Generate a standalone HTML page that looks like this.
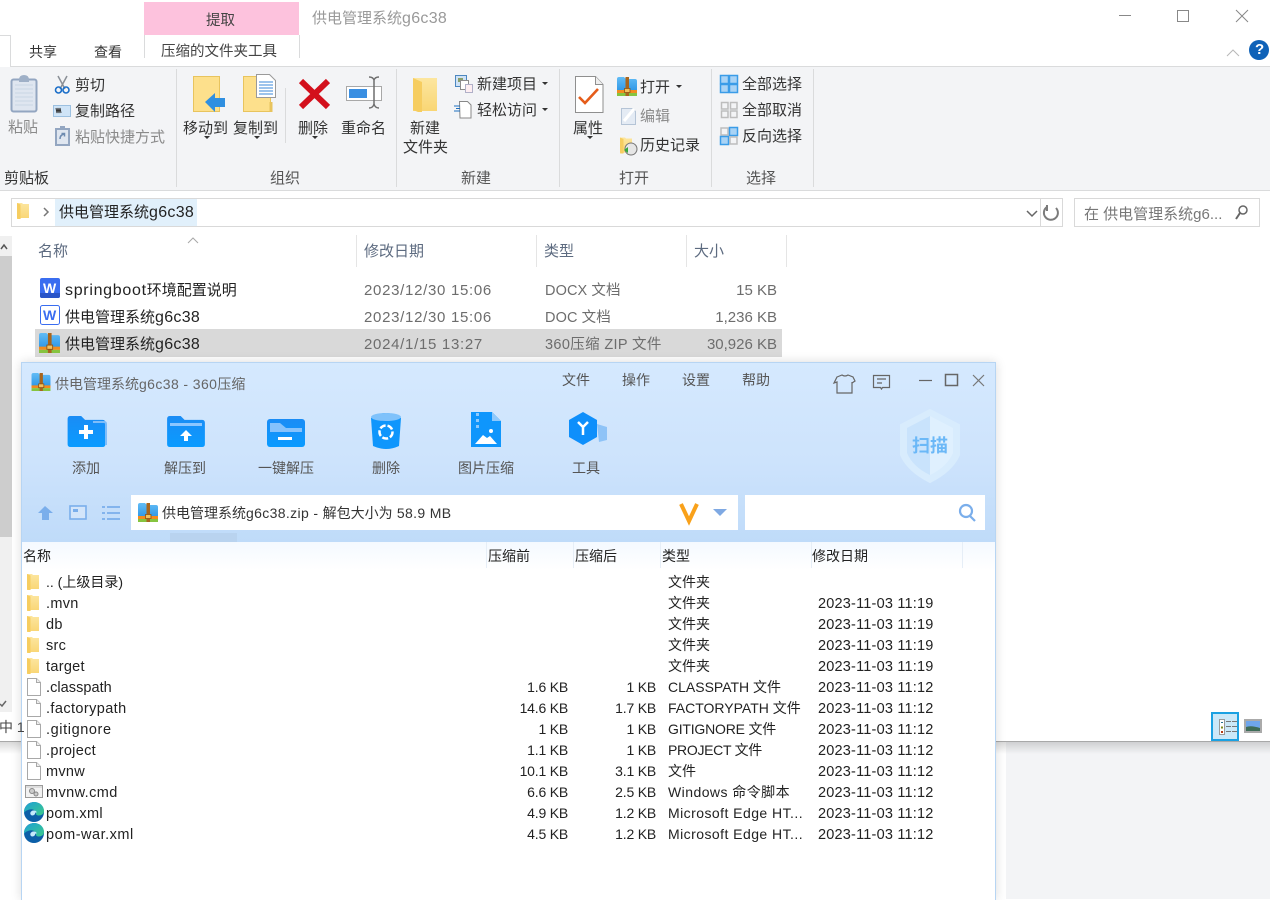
<!DOCTYPE html>
<html lang="zh"><head><meta charset="utf-8"><title>供电管理系统g6c38</title>
<style>
html,body{margin:0;padding:0;background:#fff}
body{width:1270px;height:899px;position:relative;overflow:hidden;font-family:"Liberation Sans","Noto Sans CJK SC",sans-serif;font-size:15px;color:#333}
.b,.t{position:absolute}
.t{white-space:nowrap;line-height:20px;margin-top:1px}
.g{color:#8a8a8a}.d{color:#6d6d6d;margin-top:2px}.h{color:#5d6b80}
.l{letter-spacing:.7px}
.r{text-align:right}
.c{text-align:center}
.w{font-size:14px;color:#555;margin-top:0}
.f,.n,.y,.m{color:#222;margin-top:2px}
.f{font-size:14.5px;letter-spacing:.3px}
.n{font-size:14px;letter-spacing:-.2px;margin-top:1px}
.y{font-size:14px;margin-top:1px}
.m{font-size:14.5px;letter-spacing:.2px}
.u{margin-top:0;font-size:14px;color:#555}
.e{margin-top:2px}
.s{margin-top:0;font-size:14px;color:#222}
i{font-style:normal;font-size:16px;letter-spacing:.3px}
i.k{font-size:14px;letter-spacing:.4px}
svg{position:absolute;left:0;top:0}
</style></head><body>

<!-- explorer backgrounds -->
<div class="b" style="left:1006px;top:741px;width:264px;height:158px;background:#f3f4f6"></div>
<div class="b" style="left:0;top:741px;width:1270px;height:1px;background:#a8a8a8"></div>
<div class="b" style="left:0;top:742px;width:1270px;height:12px;background:linear-gradient(#00000026,#00000000)"></div>
<div class="b" style="left:0;top:66px;width:1270px;height:123px;background:#f3f4f6;border-top:1px solid #dadbdc;border-bottom:1px solid #dadbdc"></div>
<div class="b" style="left:0;top:35px;width:10px;height:31px;background:#fff;border-right:1px solid #dadbdc;border-top:1px solid #dadbdc"></div>
<div class="b" style="left:144px;top:2px;width:155px;height:33px;background:#fdc2dd"></div>
<div class="b" style="left:144px;top:35px;width:154px;height:23px;background:#fff;border-left:1px solid #dadbdc;border-right:1px solid #dadbdc"></div>
<div class="b" style="left:176px;top:69px;width:1px;height:118px;background:#dadbdc"></div>
<div class="b" style="left:396px;top:69px;width:1px;height:118px;background:#dadbdc"></div>
<div class="b" style="left:559px;top:69px;width:1px;height:118px;background:#dadbdc"></div>
<div class="b" style="left:711px;top:69px;width:1px;height:118px;background:#dadbdc"></div>
<div class="b" style="left:813px;top:69px;width:1px;height:118px;background:#dadbdc"></div>
<div class="b" style="left:285px;top:88px;width:1px;height:55px;background:#dadbdc"></div>

<!-- address + search -->
<div class="b" style="left:11px;top:198px;width:1050px;height:27px;border:1px solid #d9d9d9;background:#fff"></div>
<div class="b" style="left:55px;top:199px;width:142px;height:27px;background:#e1f0fb"></div>
<div class="b" style="left:1040px;top:199px;width:1px;height:27px;background:#d9d9d9"></div>
<div class="b" style="left:1074px;top:198px;width:184px;height:27px;border:1px solid #d9d9d9;background:#fff"></div>

<!-- left scrollbar -->
<div class="b" style="left:0;top:236px;width:12px;height:476px;background:#f0f0f0"></div>
<div class="b" style="left:0;top:256px;width:12px;height:281px;background:#cdcdcd"></div>

<!-- column separators and selection -->
<div class="b" style="left:356px;top:235px;width:1px;height:32px;background:#e5e5e5"></div>
<div class="b" style="left:536px;top:235px;width:1px;height:32px;background:#e5e5e5"></div>
<div class="b" style="left:686px;top:235px;width:1px;height:32px;background:#e5e5e5"></div>
<div class="b" style="left:786px;top:235px;width:1px;height:32px;background:#e5e5e5"></div>
<div class="b" style="left:35px;top:329px;width:747px;height:28px;background:#d9d9d9"></div>

<!-- view buttons bg -->
<div class="b" style="left:1211px;top:712px;width:24px;height:25px;background:#cbe8f8;border:2px solid #1ba1e2"></div>

<!-- 360 window -->
<div class="b" style="left:21px;top:362px;width:973px;height:537px;background:#fff;border:1px solid #b7d5f3;border-bottom:0;box-shadow:0 0 10px rgba(0,0,0,.14)"></div>
<div class="b" style="left:22px;top:363px;width:973px;height:179px;background:linear-gradient(#d5e9fe,#cde3fc 55%,#bfdbf9)"></div>
<div class="b" style="left:22px;top:542px;width:973px;height:28px;background:linear-gradient(#f4f9ff,#fff)"></div>
<div class="b" style="left:131px;top:495px;width:607px;height:35px;background:#fff"></div>
<div class="b" style="left:745px;top:495px;width:240px;height:35px;background:#fff"></div>
<div class="b" style="left:170px;top:533px;width:67px;height:9px;background:#b9d3ef"></div>
<div class="b" style="left:486px;top:542px;width:1px;height:26px;background:#e6eef7"></div>
<div class="b" style="left:573px;top:542px;width:1px;height:26px;background:#e6eef7"></div>
<div class="b" style="left:660px;top:542px;width:1px;height:26px;background:#e6eef7"></div>
<div class="b" style="left:811px;top:542px;width:1px;height:26px;background:#e6eef7"></div>
<div class="b" style="left:962px;top:542px;width:1px;height:26px;background:#e6eef7"></div>

<svg width="1270" height="899" viewBox="0 0 1270 899" xmlns="http://www.w3.org/2000/svg">
<defs>
<linearGradient id="fy" x1="0" y1="0" x2="0" y2="1"><stop offset="0" stop-color="#fce69f"/><stop offset="1" stop-color="#f9d674"/></linearGradient>
<linearGradient id="bl" x1="0" y1="0" x2="0" y2="1"><stop offset="0" stop-color="#1a8cf5"/><stop offset="1" stop-color="#0a9bff"/></linearGradient>
<linearGradient id="zb" x1="0" y1="0" x2="0" y2="1"><stop offset="0" stop-color="#62bcf6"/><stop offset="1" stop-color="#2f97e6"/></linearGradient>
<linearGradient id="eg" x1="0" y1="0" x2="1" y2="1"><stop offset="0" stop-color="#1c9fd8"/><stop offset="1" stop-color="#3ccb8a"/></linearGradient>
<symbol id="folder" viewBox="0 0 12 16"><path d="M0 0h5l1 1h6v14H4l-1 1H0z" fill="url(#fy)"/><path d="M0 0l3.500 1.500V16H1.500L0 15z" fill="#f6cd60"/></symbol>
<symbol id="zip" viewBox="0 0 20 19"><path d="M0 2q0-2 2-2h5l2 2h9q2 0 2 2v10H0z" fill="url(#zb)"/><path d="M0 13h20v3H0z" fill="#f28c1e"/><path d="M0 16h20v3H0z" fill="#86c440"/><path d="M8.500 0h3.500v19H8.500z" fill="#a8651d"/><path d="M7.500 11.500h5.500v4H7.500z" fill="#f3c15c" stroke="#8a4f12" stroke-width=".8"/></symbol>
<symbol id="file" viewBox="0 0 14 18"><path d="M.5.5h9l4 4v13H.5z" fill="#fff" stroke="#a8a8a8"/><path d="M9.500.5v4h4" fill="#eee" stroke="#a8a8a8"/></symbol>
<symbol id="edge" viewBox="0 0 20 20"><circle cx="10" cy="10" r="10" fill="#0c5fa8"/><path d="M0 9C1 3 6 0 10 0c6 0 10 4 10 9 0 3-3 4.500-5 4.500-2 0-3.500-1-3-2.500-.5-3-3.500-4.500-6.500-3.500C3 8.300 1 9 0 11z" fill="url(#eg)"/><path d="M11 12c-1 1.500-3 2-4 1-1.500-1.500-.5-4 2-4.500 2-.3 3.500.5 4 2-1-.3-2 0-2 1.500z" fill="#c4e9fb"/></symbol>
<symbol id="fp" viewBox="0 0 39 32"><path d="M0 3q0-3 3-3h11l4 4h18q3 0 3 3v22q0 3-3 3H3q-3 0-3-3z" fill="url(#bl)"/></symbol>
</defs>

<!-- window controls -->
<path d="M1119 15.500h12" stroke="#888" fill="none"/>
<rect x="1177.500" y="10.500" width="11" height="11" fill="none" stroke="#888"/>
<path d="M1236 10l12 12M1248 10l-12 12" stroke="#888" fill="none"/>
<path d="M1227 56l6-6 6 6" stroke="#b8b8b8" fill="none"/>
<circle cx="1259" cy="50" r="10" fill="#0f62b8"/>

<!-- clipboard group -->
<rect x="11.500" y="79.500" width="25" height="32" rx="2" fill="#dfe6f0" stroke="#93a6c1" stroke-width="2"/>
<path d="M15 85h18M15 89h18M15 93h18M15 97h18M15 101h18M15 105h18" stroke="#c9d5e4"/>
<path d="M19 80q0-5 5-5t5 5v2H19z" fill="#9fb0c7"/>
<path d="M58 76l7 13M67 76l-7 13" stroke="#8a8f96" stroke-width="1.500" fill="none"/>
<circle cx="58.500" cy="90" r="3" fill="none" stroke="#1a6ec8" stroke-width="1.600"/><circle cx="66" cy="90" r="3" fill="none" stroke="#1a6ec8" stroke-width="1.600"/>
<rect x="53.500" y="105.500" width="17" height="11" fill="#cfe4f7" stroke="#9cc0e0"/><path d="M56 108l1 5 1-5 1 5 1-5 1 5" stroke="#333" fill="none"/>
<rect x="56" y="129" width="13" height="16" fill="#dfe6f0" stroke="#93a6c1" stroke-width="2"/><rect x="60" y="126" width="5" height="4" fill="#93a6c1"/><path d="M60 139q0-4 4-5M61.500 133.500h3v3" stroke="#6e8bb0" fill="none" stroke-width="1.500"/>

<!-- organise -->
<path d="M193.500 76.500h26v35h-26z" fill="#fde08c" stroke="#e8c45e"/>
<path d="M205 102l10-9v5h10v9h-10v5z" fill="#2f8fe0"/>
<path d="M243.500 76.500h27v35h-27z" fill="#fde08c" stroke="#e8c45e"/>
<path d="M271 112v-10" stroke="#e8c45e" stroke-width="3"/>
<path d="M256.500 74.500h13l6 6v17h-19z" fill="#fff" stroke="#9a9a9a"/>
<path d="M259 82h14M259 85h14M259 88h14M259 91h14M259 94h14" stroke="#3a87da"/>
<path d="M301 81l27 26M328 81l-27 26" stroke="#d3101c" stroke-width="6" fill="none"/>
<rect x="346.500" y="86.500" width="35" height="14" fill="#fff" stroke="#a8a8a8"/>
<rect x="349" y="89" width="18" height="9" fill="#3a8fe2"/>
<path d="M369 77q4 0 5 3v24q-1 4-5 4M379 77q-4 0-5 3v24q1 4 5 4" stroke="#6e6e6e" stroke-width="1.500" fill="none"/>

<!-- new -->
<path d="M413 78h24v33h-24z" fill="url(#fy)"/><path d="M413 78l9 4v30l-4 0-5-2z" fill="#f6cd60"/>
<rect x="455.500" y="75.500" width="11" height="11" fill="#cfe2f5" stroke="#4c87c0"/><rect x="458" y="78" width="5" height="4" fill="#8a9f6a"/>
<rect x="460.500" y="80.500" width="8" height="9" fill="#fff" stroke="#8d8d8d"/><rect x="465.500" y="84.500" width="7" height="8" fill="#fdeef2" stroke="#b0b0c8"/>
<path d="M459.500 101.500h8l3.500 3.500v13h-11z" fill="#fff" stroke="#888"/>
<path d="M454 106h6M456 108.500h4M454 111h6" stroke="#1d6fc0"/>

<!-- open -->
<path d="M575.500 76.500h20l7.500 8v28h-27.500z" fill="#fff" stroke="#8f8f8f"/><path d="M595.500 76.500v8h7.500" fill="#eee" stroke="#8f8f8f"/>
<path d="M579 97l6 6 13-14" stroke="#e55c1a" stroke-width="2.600" fill="none"/>
<use href="#zip" x="617" y="77" width="20" height="19"/>
<path d="M621.500 108.500h11l3 3v13h-14z" fill="#e4ebf4" stroke="#b5c4d6"/><path d="M624 121l10-12" stroke="#fff" stroke-width="3"/>
<use href="#folder" x="620" y="137" width="12" height="17"/>
<circle cx="631" cy="149" r="6" fill="#e6e6e6" stroke="#777"/><path d="M624 150l4-3v6z" fill="#38a83c"/>

<!-- select -->
<g fill="#a9d3f5" stroke="#3a9ce8" stroke-width="1.500"><rect x="720.500" y="75.500" width="8" height="8"/><rect x="729.500" y="75.500" width="8" height="8"/><rect x="720.500" y="84.500" width="8" height="8"/><rect x="729.500" y="84.500" width="8" height="8"/></g>
<g fill="#f3f4f6" stroke="#bdbdbd" stroke-width="1.500"><rect x="721.500" y="102.500" width="6.500" height="6.500"/><rect x="730.500" y="102.500" width="6.500" height="6.500"/><rect x="721.500" y="111" width="6.500" height="6.500"/><rect x="730.500" y="111" width="6.500" height="6.500"/></g>
<g stroke-width="1.500"><rect x="721" y="128" width="7" height="7" fill="#f3f4f6" stroke="#bdbdbd"/><rect x="729.500" y="127.500" width="8" height="8" fill="#a9d3f5" stroke="#3a9ce8"/><rect x="720.500" y="136.500" width="8" height="8" fill="#a9d3f5" stroke="#3a9ce8"/><rect x="730" y="137" width="7" height="7" fill="#f3f4f6" stroke="#bdbdbd"/></g>

<!-- dropdown triangles -->
<g fill="#333"><path d="M204 136h6l-3 3zM254 136h6l-3 3zM312 136h6l-3 3zM587 136h6l-3 3zM542 82h6l-3 3zM542 108h6l-3 3zM676 85h6l-3 3z"/></g>

<!-- address icons -->
<use href="#folder" x="17" y="203" width="12" height="16"/>
<path d="M44 208l4 4-4 4" stroke="#777" stroke-width="1.500" fill="none"/>
<path d="M1027 211l5 5 5-5" stroke="#666" stroke-width="1.500" fill="none"/>
<path d="M1047 207a7 7 0 1 0 9 1M1047 205v5h-1" stroke="#7b7b7b" stroke-width="2" fill="none"/>
<circle cx="1243" cy="210" r="4" fill="none" stroke="#666" stroke-width="1.500"/><path d="M1240 213l-4 6" stroke="#666" stroke-width="2"/>
<path d="M188 243l5-5 5 5" stroke="#a8a8a8" fill="none"/>
<path d="M1 249l3-4 3 4" stroke="#555" stroke-width="1.500" fill="none"/>
<path d="M0 704l2 2 4-5" stroke="#666" stroke-width="1.500" fill="none"/>

<!-- explorer files -->
<rect x="40" y="278" width="20" height="20" rx="2" fill="#3a6df0"/><path d="M40 293h20v3q0 2-2 2H42q-2 0-2-2z" fill="#2a55c8"/>
<rect x="40.500" y="305.500" width="19" height="19" rx="2" fill="#fff" stroke="#3a6df0"/>
<use href="#zip" x="39" y="333" width="21" height="20"/>

<!-- views -->
<rect x="1219.500" y="719.500" width="5" height="15" fill="#fff" stroke="#999"/>
<path d="M1221 722h2v1h-2z" fill="#27708f"/><path d="M1221 726.500h2v2h-2z" fill="#7c8a1e"/><path d="M1221 731h2v2h-2z" fill="#b83a12"/>
<path d="M1226 721.500h5M1232 721.500h5M1226 726.500h5M1232 726.500h5M1226 731.500h5M1232 731.500h5" stroke="#777"/>
<rect x="1245" y="720" width="16" height="12" fill="#6fa6ec" stroke="#aaa" stroke-width="2"/><path d="M1246 727q5-2 14 1v3h-14z" fill="#3f6d58"/>

<!-- 360 title bar -->
<use href="#zip" x="31" y="373" width="20" height="18"/>
<path d="M837 377l5-2q3 2 6 0l5 2 2 4-3 2v-1 11h-15v-11l-3 1z" fill="none" stroke="#666" stroke-width="1.200"/>
<path d="M873.500 375.500h16v12h-7l-1 1.500-1-1.500h-7zM877 379h9M877 383h5" fill="none" stroke="#666" stroke-width="1.200"/>
<path d="M919 380.500h13" stroke="#666" stroke-width="1.200"/>
<rect x="945.500" y="374.500" width="12" height="11" fill="none" stroke="#666" stroke-width="1.500"/>
<path d="M973 375l11 11M984 375l-11 11" stroke="#777" stroke-width="1.200"/>

<!-- 360 toolbar -->
<use href="#fp" x="67" y="416" width="39" height="31"/>
<path d="M93 422h11q2 0 2 2v21" fill="none" stroke="#7fbdf9" stroke-width="2"/>
<path d="M84 425h4v5h5v4h-5v5h-4v-5h-5v-4h5z" fill="#fff"/>
<use href="#fp" x="167" y="416" width="38" height="31"/>
<path d="M170 423h32v3h-32z" fill="#8cc6ff"/><path d="M186 430l6 6h-4v5h-4v-5h-4z" fill="#fff"/>
<rect x="267" y="419" width="38" height="28" rx="3" fill="url(#bl)"/>
<path d="M270 423h10l6 5h16v4h-32z" fill="#85c2fc"/>
<path d="M278 437h14v3h-14z" fill="#fff"/>
<path d="M371 418q15-10 30 0l-2 28q-13 6-26 0z" fill="#0f96fc"/>
<ellipse cx="386" cy="417" rx="15" ry="4" fill="#7fc2fb"/>
<circle cx="386" cy="432" r="6.500" fill="none" stroke="#fff" stroke-width="2.500" stroke-dasharray="6 2"/>
<path d="M471 412h21l9 9v26h-30z" fill="#0f96fc"/><path d="M492 412l9 9h-9z" fill="#8ec9fc"/>
<path d="M476 413h3v3h-3zM476 419h3v3h-3zM476 425h3v3h-3z" fill="#8ec9fc"/>
<path d="M475 444l8-9 4 3 3-2 7 8z" fill="#fff"/><circle cx="491" cy="431" r="2" fill="#fff"/>
<path d="M597 424l10 3v13l-8 2z" fill="#8ec3f7"/>
<path d="M583 412l14 8v17l-14 8-14-8v-17z" fill="#0e8ffb"/>
<path d="M578 422l5 5 5-5M583 427v8" stroke="#fff" stroke-width="2.500" fill="none"/>

<!-- shield -->
<path d="M930 410l29 15v30q-7 16-29 27q-22-11-29-27v-30z" fill="#d8ecfd" stroke="#d8ecfd" stroke-width="2"/>
<path d="M930 416l-23 12v25q6 14 23 22z" fill="#c9e3fc"/>
<path d="M930 416l23 12v25q-6 14-23 22z" fill="#dff0fe"/>

<!-- 360 address row -->
<path d="M38 513l7-7 8 7h-4v7h-7v-7z" fill="#7aaeeb"/>
<rect x="70" y="506" width="16" height="13" fill="#d3e5fa" stroke="#7aaeeb" stroke-width="1.600"/><path d="M73 509h5v3h-5z" fill="#7aaeeb"/>
<path d="M102 507h3M107 507h13M102 513h3M107 513h13M102 519h3M107 519h13" stroke="#7aaeeb" stroke-width="1.800"/>
<use href="#zip" x="138" y="503" width="20" height="19"/>
<path d="M681 504l8 17 8-17" stroke="#f9a11a" stroke-width="4" fill="none"/>
<path d="M713 509h14l-7 7z" fill="#7fa9e3"/>
<circle cx="966" cy="511" r="6" fill="none" stroke="#7aaeeb" stroke-width="2.200"/><path d="M970 516l5 5" stroke="#7aaeeb" stroke-width="2.200"/>

<!-- list icons -->
<use href="#folder" x="27" y="574" width="12" height="16"/>
<use href="#folder" x="27" y="595" width="12" height="16"/>
<use href="#folder" x="27" y="616" width="12" height="16"/>
<use href="#folder" x="27" y="637" width="12" height="16"/>
<use href="#folder" x="27" y="658" width="12" height="16"/>
<use href="#file" x="27" y="678" width="14" height="18"/>
<use href="#file" x="27" y="699" width="14" height="18"/>
<use href="#file" x="27" y="720" width="14" height="18"/>
<use href="#file" x="27" y="741" width="14" height="18"/>
<use href="#file" x="27" y="762" width="14" height="18"/>
<rect x="25.500" y="785.500" width="17" height="12" fill="#f2f2f2" stroke="#9a9a9a"/><path d="M26 787h16" stroke="#c8c8c8"/><circle cx="32" cy="791" r="2.500" fill="#ccc" stroke="#888"/><circle cx="36" cy="794" r="2" fill="#ccc" stroke="#888"/>
<use href="#edge" x="24" y="802" width="20" height="20"/>
<use href="#edge" x="24" y="823" width="20" height="20"/>
</svg>

<!-- explorer text -->
<div class="t e" style="left:312px;top:7px;color:#999">供电管理系统<i>g6c38</i></div>
<div class="t e" style="left:206px;top:9px;font-size:14.500px;color:#444">提取</div>
<div class="t" style="left:29px;top:41px;font-size:14px">共享</div>
<div class="t" style="left:94px;top:41px;font-size:14px">查看</div>
<div class="t" style="left:161px;top:41px;font-size:14.500px;color:#444">压缩的文件夹工具</div>

<div class="t g" style="left:8px;top:117px">粘贴</div>
<div class="t" style="left:75px;top:75px">剪切</div>
<div class="t" style="left:75px;top:101px">复制路径</div>
<div class="t g" style="left:75px;top:127px">粘贴快捷方式</div>
<div class="t" style="left:183px;top:118px">移动到</div>
<div class="t" style="left:233px;top:118px">复制到</div>
<div class="t" style="left:298px;top:118px">删除</div>
<div class="t" style="left:341px;top:118px">重命名</div>
<div class="t" style="left:410px;top:118px">新建</div>
<div class="t" style="left:403px;top:137px">文件夹</div>
<div class="t" style="left:477px;top:74px">新建项目</div>
<div class="t" style="left:477px;top:100px">轻松访问</div>
<div class="t" style="left:573px;top:118px">属性</div>
<div class="t" style="left:640px;top:77px">打开</div>
<div class="t g" style="left:640px;top:106px">编辑</div>
<div class="t" style="left:640px;top:135px">历史记录</div>
<div class="t" style="left:742px;top:74px">全部选择</div>
<div class="t" style="left:742px;top:100px">全部取消</div>
<div class="t" style="left:742px;top:126px">反向选择</div>
<div class="t e" style="left:4px;top:167px">剪贴板</div>
<div class="t e" style="left:270px;top:167px;color:#555">组织</div>
<div class="t e" style="left:461px;top:167px;color:#555">新建</div>
<div class="t e" style="left:619px;top:167px;color:#555">打开</div>
<div class="t e" style="left:746px;top:167px;color:#555">选择</div>
<div class="t" style="left:1255px;top:39px;color:#fff;font-weight:bold;font-size:15px">?</div>

<div class="t" style="left:59px;top:202px;color:#222">供电管理系统<i>g6c38</i></div>
<div class="t e" style="left:1084px;top:203px;color:#777">在 供电管理系统g6...</div>

<div class="t h" style="left:38px;top:241px">名称</div>
<div class="t h" style="left:364px;top:241px">修改日期</div>
<div class="t h" style="left:544px;top:241px">类型</div>
<div class="t h" style="left:694px;top:241px">大小</div>

<div class="t e" style="left:65px;top:279px;color:#222"><i style="letter-spacing:.7px">springboot</i>环境配置说明</div>
<div class="t e" style="left:65px;top:306px;color:#222">供电管理系统<i>g6c38</i></div>
<div class="t e" style="left:65px;top:333px;color:#222">供电管理系统<i>g6c38</i></div>
<div class="t" style="left:43px;top:278px;color:#fff;font-weight:bold;font-size:14px;margin-top:0">W</div>
<div class="t" style="left:43px;top:305px;color:#3a6df0;font-weight:bold;font-size:14px;margin-top:0">W</div>

<div class="t d l" style="left:364px;top:279px">2023/12/30 15:06</div>
<div class="t d l" style="left:364px;top:306px">2023/12/30 15:06</div>
<div class="t d l" style="left:364px;top:333px">2024/1/15 13:27</div>
<div class="t d" style="left:545px;top:279px;font-size:14.500px;letter-spacing:.1px">DOCX 文档</div>
<div class="t d" style="left:545px;top:306px;font-size:14.500px;letter-spacing:.1px">DOC 文档</div>
<div class="t d" style="left:545px;top:333px;font-size:14.500px;letter-spacing:.35px">360压缩 ZIP 文件</div>
<div class="t d r" style="left:680px;width:97px;top:279px">15 KB</div>
<div class="t d r" style="left:680px;width:97px;top:306px">1,236 KB</div>
<div class="t d r" style="left:680px;width:97px;top:333px">30,926 KB</div>
<div class="t" style="left:-1px;top:717px;font-size:14px;color:#444;margin-top:0">中 1</div>

<!-- 360 text -->
<div class="t" style="left:55px;top:374px;font-size:14px;color:#666;margin-top:0">供电管理系统<i class="k">g6c38 - 360</i>压缩</div>
<div class="t u" style="left:562px;top:370px">文件</div>
<div class="t u" style="left:622px;top:370px">操作</div>
<div class="t u" style="left:682px;top:370px">设置</div>
<div class="t u" style="left:742px;top:370px">帮助</div>
<div class="t w c" style="left:56px;width:60px;top:458px">添加</div>
<div class="t w c" style="left:155px;width:60px;top:458px">解压到</div>
<div class="t w c" style="left:256px;width:60px;top:458px">一键解压</div>
<div class="t w c" style="left:356px;width:60px;top:458px">删除</div>
<div class="t w c" style="left:456px;width:60px;top:458px">图片压缩</div>
<div class="t w c" style="left:556px;width:60px;top:458px">工具</div>
<div class="t" style="left:912px;top:435px;font-size:18px;font-weight:bold;color:#6bb8f7">扫描</div>
<div class="t" style="left:162px;top:503px;font-size:14px;color:#333;margin-top:0">供电管理系统<i class="k" style="letter-spacing:.35px">g6c38.zip - </i>解包大小为<i class="k" style="letter-spacing:.35px"> 58.9 MB</i></div>

<div class="t s" style="left:23px;top:546px">名称</div>
<div class="t s" style="left:488px;top:546px">压缩前</div>
<div class="t s" style="left:575px;top:546px">压缩后</div>
<div class="t s" style="left:662px;top:546px">类型</div>
<div class="t s" style="left:812px;top:546px">修改日期</div>

<div class="t y" style="left:46px;top:571px">.. (上级目录)</div>
<div class="t f" style="left:46px;top:592px">.mvn</div>
<div class="t f" style="left:46px;top:613px">db</div>
<div class="t f" style="left:46px;top:634px">src</div>
<div class="t f" style="left:46px;top:655px">target</div>
<div class="t f" style="left:46px;top:676px;letter-spacing:.05px">.classpath</div>
<div class="t f" style="left:46px;top:697px;letter-spacing:.4px">.factorypath</div>
<div class="t f" style="left:46px;top:718px;letter-spacing:.6px">.gitignore</div>
<div class="t f" style="left:46px;top:739px">.project</div>
<div class="t f" style="left:46px;top:760px">mvnw</div>
<div class="t f" style="left:46px;top:781px;letter-spacing:.4px">mvnw.cmd</div>
<div class="t f" style="left:46px;top:802px">pom.xml</div>
<div class="t f" style="left:46px;top:823px;letter-spacing:.5px">pom-war.xml</div>

<div class="t n r" style="left:480px;width:88px;top:676px">1.6 KB</div>
<div class="t n r" style="left:480px;width:88px;top:697px">14.6 KB</div>
<div class="t n r" style="left:480px;width:88px;top:718px">1 KB</div>
<div class="t n r" style="left:480px;width:88px;top:739px">1.1 KB</div>
<div class="t n r" style="left:480px;width:88px;top:760px">10.1 KB</div>
<div class="t n r" style="left:480px;width:88px;top:781px">6.6 KB</div>
<div class="t n r" style="left:480px;width:88px;top:802px">4.9 KB</div>
<div class="t n r" style="left:480px;width:88px;top:823px">4.5 KB</div>

<div class="t n r" style="left:570px;width:86px;top:676px">1 KB</div>
<div class="t n r" style="left:570px;width:86px;top:697px">1.7 KB</div>
<div class="t n r" style="left:570px;width:86px;top:718px">1 KB</div>
<div class="t n r" style="left:570px;width:86px;top:739px">1 KB</div>
<div class="t n r" style="left:570px;width:86px;top:760px">3.1 KB</div>
<div class="t n r" style="left:570px;width:86px;top:781px">2.5 KB</div>
<div class="t n r" style="left:570px;width:86px;top:802px">1.2 KB</div>
<div class="t n r" style="left:570px;width:86px;top:823px">1.2 KB</div>

<div class="t y" style="left:668px;top:571px">文件夹</div>
<div class="t y" style="left:668px;top:592px">文件夹</div>
<div class="t y" style="left:668px;top:613px">文件夹</div>
<div class="t y" style="left:668px;top:634px">文件夹</div>
<div class="t y" style="left:668px;top:655px">文件夹</div>
<div class="t y" style="left:668px;top:676px">CLASSPATH 文件</div>
<div class="t y" style="left:668px;top:697px">FACTORYPATH 文件</div>
<div class="t y" style="left:668px;top:718px;letter-spacing:-.2px">GITIGNORE 文件</div>
<div class="t y" style="left:668px;top:739px;letter-spacing:-.3px">PROJECT 文件</div>
<div class="t y" style="left:668px;top:760px">文件</div>
<div class="t y" style="left:668px;top:781px;letter-spacing:.45px">Windows 命令脚本</div>
<div class="t y" style="left:668px;top:802px;letter-spacing:.45px">Microsoft Edge HT...</div>
<div class="t y" style="left:668px;top:823px;letter-spacing:.45px">Microsoft Edge HT...</div>

<div class="t m" style="left:818px;top:592px">2023-11-03 11:19</div>
<div class="t m" style="left:818px;top:613px">2023-11-03 11:19</div>
<div class="t m" style="left:818px;top:634px">2023-11-03 11:19</div>
<div class="t m" style="left:818px;top:655px">2023-11-03 11:19</div>
<div class="t m" style="left:818px;top:676px">2023-11-03 11:12</div>
<div class="t m" style="left:818px;top:697px">2023-11-03 11:12</div>
<div class="t m" style="left:818px;top:718px">2023-11-03 11:12</div>
<div class="t m" style="left:818px;top:739px">2023-11-03 11:12</div>
<div class="t m" style="left:818px;top:760px">2023-11-03 11:12</div>
<div class="t m" style="left:818px;top:781px">2023-11-03 11:12</div>
<div class="t m" style="left:818px;top:802px">2023-11-03 11:12</div>
<div class="t m" style="left:818px;top:823px">2023-11-03 11:12</div>
</body></html>
